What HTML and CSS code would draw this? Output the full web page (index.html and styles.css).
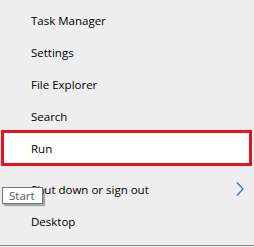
FILE: index.html
```html
<!DOCTYPE html>
<html>
<head>
	<meta charset="utf-8">
	<meta name="viewport" content="width=device-width, initial-scale=1">
	<title>Win+X menu</title>
	<link rel="stylesheet" href="styles.css">
</head>
<body>
	<div class="menu">
		<div class="item">Task Manager</div>
		<div class="item">Settings</div>
		<div class="item">File Explorer</div>
		<div class="item">Search</div>
		<div class="item run">Run</div>
		<div class="separator"></div>
		<div class="item">
			<span>Shut down or sign out</span>
			<svg class="chevron" width="8" height="14" viewBox="0 0 8 14">
				<polyline points="1,0.5 7,7 1,13.5" fill="none" stroke="#3a6aa8" stroke-width="1.2"/>
			</svg>
		</div>
		<div class="item">Desktop</div>
		<div class="tooltip">Start</div>
	</div>
	<div class="taskbar-edge"></div>
</body>
</html>
```

FILE: styles.css
```css
body {
	margin: 0;
	background: #eeeeee;
	font-family: "Segoe UI", "Open Sans", sans-serif;
	font-size: 11.5px;
	color: #000;
	width: 254px;
	height: 247px;
	overflow: hidden;
}
.menu {
	position: relative;
	padding-top: 4px;
	height: 241px;
}
.item {
	display: flex;
	align-items: center;
	justify-content: space-between;
	height: 32px;
	margin: 0 4px 0 3px;
	padding: 0 6px 0 28px;
}
.item.run {
	background: #fff;
	outline: 3px solid #e81123;
	outline-offset: -1px;
}
.separator {
	height: 9px;
}
.chevron {
	display: block;
}
.tooltip {
	position: absolute;
	left: 2px;
	top: 187px;
	width: 33px;
	height: 15px;
	line-height: 15px;
	padding-left: 6px;
	box-sizing: content-box;
	background: #fff;
	border: 1px solid #767676;
	box-shadow: 2px 2px 1px rgba(0, 0, 0, 0.3);
	color: #575757;
}
.taskbar-edge {
	height: 1px;
	background: #8a8a8a;
}
```
